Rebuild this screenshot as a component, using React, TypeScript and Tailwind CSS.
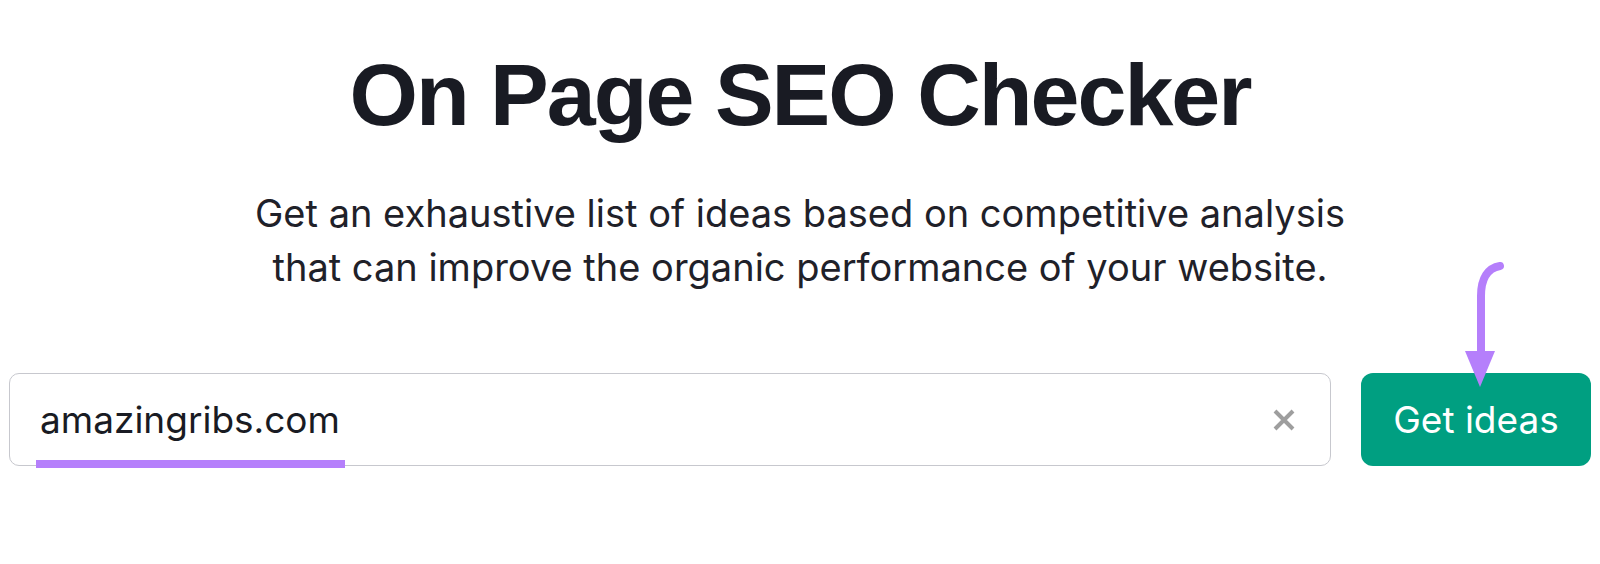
export default function App() {
  return (
    <div className="relative w-[1600px] h-[564px] bg-white flex flex-col items-center overflow-hidden">
      {/* Heading */}
      <h1 className="mt-[51px] text-[88px] leading-[88px] font-bold tracking-[-2px] text-[#191b23] font-['Liberation_Sans',Arial,sans-serif]">
        On Page SEO Checker
      </h1>

      <p className="mt-[47px] text-center text-[38px] leading-[54px] text-[#1f2129] font-['Inter',sans-serif]">
        Get an exhaustive list of ideas based on competitive analysis
        <br />
        that can improve the organic performance of your website.
      </p>

      {/* Search row */}
      <div className="mt-[79px] w-full px-[9px] flex gap-[30px] font-['Inter',sans-serif]">
        <div className="relative flex-1 h-[93px] border border-[#c7c8ce] rounded-[10px] flex items-center pl-[30px] pr-[34px]">
          <span className="flex-1 text-[37px] text-[#191b23]">amazingribs.com</span>
          <svg width="24" height="24" viewBox="0 0 24 24" className="shrink-0">
            <path d="M3 3 L21 21 M21 3 L3 21" stroke="#9e9e9e" strokeWidth="4" strokeLinecap="butt" />
          </svg>
          <div className="absolute left-[26px] bottom-[-3px] w-[309px] h-[8px] bg-[#b57ffb]" />
        </div>
        <button className="w-[230px] h-[93px] rounded-[12px] bg-[#009f81] text-white text-[37px]">
          Get ideas
        </button>
      </div>

      {/* Annotation arrow */}
      <svg className="absolute left-[1455px] top-[255px]" width="50" height="140" viewBox="1455 255 50 140">
        <path
          d="M1500 266 C1488 268 1481 278 1481 296 L1481 354"
          fill="none"
          stroke="#b57ffb"
          strokeWidth="8"
          strokeLinecap="round"
        />
        <polygon points="1465,351 1495,351 1480,387" fill="#b57ffb" />
      </svg>
    </div>
  );
}
